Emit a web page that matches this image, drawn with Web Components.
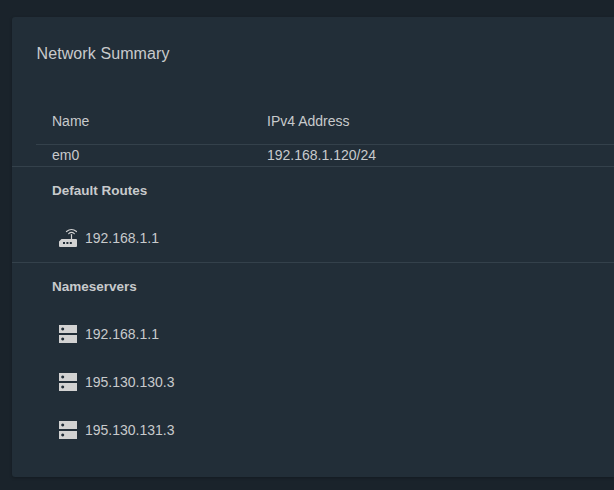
<!DOCTYPE html>
<html>
<head>
<meta charset="utf-8">
<title>Network Summary</title>
<style>
  html, body { margin: 0; height: 100%; }
  body {
    background: #1a232b;
    color: #c8cacc;
    font-family: "Liberation Sans", Arial, sans-serif;
    overflow: hidden;
  }
</style>
</head>
<body>
<network-summary>
  <net-table slot="table" interface="em0" address="192.168.1.120/24"></net-table>
  <net-section slot="sections" label="Default Routes">
    <net-host icon="router">192.168.1.1</net-host>
  </net-section>
  <net-section slot="sections" label="Nameservers">
    <net-host icon="server">192.168.1.1</net-host>
    <net-host icon="server">195.130.130.3</net-host>
    <net-host icon="server">195.130.131.3</net-host>
  </net-section>
</network-summary>

<script>
class NetworkSummary extends HTMLElement {
  connectedCallback() {
    this.attachShadow({ mode: 'open' });
    this.shadowRoot.innerHTML = `
      <style>
        :host {
          display: block;
          margin: 17px 0 0 12px;
          height: 460px;
          box-sizing: border-box;
          background: #222e38;
          border-radius: 3px 0 0 3px;
          box-shadow: 0 1px 3px rgba(0, 0, 0, .25);
        }
        h2 {
          margin: 0;
          padding: 27px 0 0 24.5px;
          height: 62px;
          font-size: 16px;
          line-height: 19px;
          font-weight: 400;
          letter-spacing: .1px;
        }
        .sections { display: flex; flex-direction: column; }
      </style>
      <h2>Network Summary</h2>
      <slot name="table"></slot>
      <div class="sections"><slot name="sections"></slot></div>
    `;
  }
}

class NetTable extends HTMLElement {
  connectedCallback() {
    this.attachShadow({ mode: 'open' });
    this.shadowRoot.innerHTML = `
      <style>
        :host { display: block; font-size: 14px; }
        .row { display: grid; grid-template-columns: 215px 1fr; padding-left: 40px; }
        .head {
          margin-left: 24px;
          padding-left: 16px;
          height: 39px;
          line-height: 19px;
          padding-top: 6px;
          box-sizing: border-box;
          border-bottom: 1px solid #34414b;
        }
        .body {
          height: 22px;
          line-height: 21px;
          box-sizing: border-box;
          border-bottom: 1px solid #34414b;
        }
      </style>
      <div class="row head"><span>Name</span><span>IPv4 Address</span></div>
      <div class="row body">
        <span>${this.getAttribute('interface')}</span>
        <span>${this.getAttribute('address')}</span>
      </div>
    `;
  }
}

class NetSection extends HTMLElement {
  connectedCallback() {
    this.attachShadow({ mode: 'open' });
    this.shadowRoot.innerHTML = `
      <style>
        :host {
          display: block;
          font-size: 13.5px;
          border-bottom: 1px solid #34414b;
        }
        :host(:last-child) { border-bottom: 0; }
        .label {
          padding: 15px 0 0 40px;
          height: 47px;
          line-height: 18px;
          box-sizing: border-box;
          font-weight: 700;
        }
      </style>
      <div class="label">${this.getAttribute('label')}</div>
      <slot></slot>
    `;
  }
}

const ICONS = {
  router: `
    <path d="M7.5 9.5Q12.5 5.5 17.5 9.5" />
    <path d="M9.7 11.6Q12.5 9.2 15.3 11.6" />
    <path d="M12.5 12.5V17" />
    <path stroke="none" fill="currentColor" fill-rule="evenodd" d="M2.5 17H17a1 1 0 0 1 1 1V24a1 1 0 0 1-1 1H1a1 1 0 0 1-1-1V19.5zM4 20h2v2H4zM7.4 20h2v2H7.4zM10.8 20h2v2H10.8z" />
  `,
  server: `
    <path stroke="none" fill="currentColor" fill-rule="evenodd" d="M0 7H18V15H0zM3.7 9.5a1.5 1.5 0 1 0 .01 0z" />
    <path stroke="none" fill="currentColor" fill-rule="evenodd" d="M0 17H18V25H0zM3.7 19.5a1.5 1.5 0 1 0 .01 0z" />
  `
};

class NetHost extends HTMLElement {
  connectedCallback() {
    this.attachShadow({ mode: 'open' });
    this.shadowRoot.innerHTML = `
      <style>
        :host {
          display: flex;
          align-items: center;
          height: 48px;
          padding-left: 47px;
          font-size: 14px;
        }
        svg {
          width: 18px;
          height: 32px;
          margin-right: 8px;
          fill: none;
          stroke: #d2d2d2;
          color: #d2d2d2;
          stroke-width: 1.2;
          stroke-linecap: round;
          flex: none;
        }
      </style>
      <svg viewBox="0 0 18 32">${ICONS[this.getAttribute('icon')]}</svg>
      <slot></slot>
    `;
  }
}

customElements.define('network-summary', NetworkSummary);
customElements.define('net-table', NetTable);
customElements.define('net-section', NetSection);
customElements.define('net-host', NetHost);
</script>
</body>
</html>
